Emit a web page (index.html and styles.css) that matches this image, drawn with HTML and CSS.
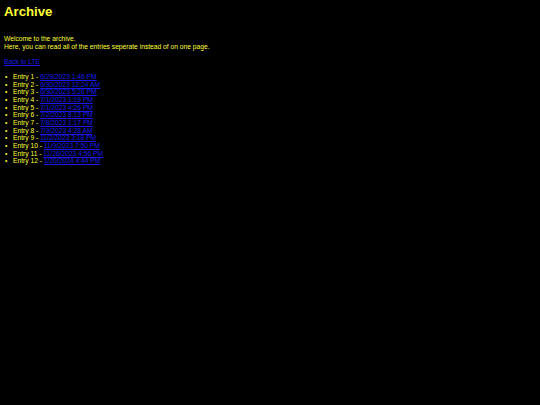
FILE: index.html
```html
<!DOCTYPE html>
<html lang="en">
<head>
    <meta charset="UTF-8">
    <meta name="viewport" content="width=device-width, initial-scale=1.0">
    <title>Archive</title>
    <link rel="stylesheet" href="styles.css">
</head>
<body>
    <h1>Archive</h1>
    <p class="intro">Welcome to the archive.<br>Here, you can read all of the entries seperate instead of on one page.</p>
    <p class="back"><a href="index.html">Back to LTE</a></p>
    <ul class="entries">
        <li>Entry 1 - <a href="entry1.html">6/29/2023 1:46 PM</a></li>
        <li>Entry 2 - <a href="entry2.html">6/30/2023 12:24 AM</a></li>
        <li>Entry 3 - <a href="entry3.html">6/30/2023 5:20 PM</a></li>
        <li>Entry 4 - <a href="entry4.html">7/1/2023 1:19 PM</a></li>
        <li>Entry 5 - <a href="entry5.html">7/1/2023 4:26 PM</a></li>
        <li>Entry 6 - <a href="entry6.html">7/2/2023 8:13 PM</a></li>
        <li>Entry 7 - <a href="entry7.html">7/8/2023 1:17 PM</a></li>
        <li>Entry 8 - <a href="entry8.html">7/9/2023 4:28 AM</a></li>
        <li>Entry 9 - <a href="entry9.html">11/2/2023 3:18 PM</a></li>
        <li>Entry 10 - <a href="entry10.html">11/9/2023 7:50 PM</a></li>
        <li>Entry 11 - <a href="entry11.html">11/26/2023 4:56 PM</a></li>
        <li>Entry 12 - <a href="entry12.html">1/20/2024 4:44 PM</a></li>
    </ul>
</body>
</html>
```

FILE: styles.css
```css
/* General Styling */
body, html {
    margin: 0;
    padding: 0;
    background: #000;
}

body {
    padding: 4px;
    font-family: 'Liberation Sans', Arial, sans-serif;
    font-size: 6.7px;
    line-height: 7.7px;
    color: #ffff33;
}

h1 {
    margin: 0;
    font-size: 13.2px;
    line-height: 15px;
    font-weight: bold;
}

a {
    color: #1a1aee;
}

.intro {
    margin: 16px 0 0;
}

.back {
    margin: 8px 0 0;
}

/* Entry list */
.entries {
    list-style: none;
    margin: 7px 0 0;
    padding: 0;
}

.entries li {
    line-height: 7.64px;
}

.entries li::before {
    content: "•";
    display: inline-block;
    width: 9px;
    padding-left: 1px;
    box-sizing: border-box;
}
```
